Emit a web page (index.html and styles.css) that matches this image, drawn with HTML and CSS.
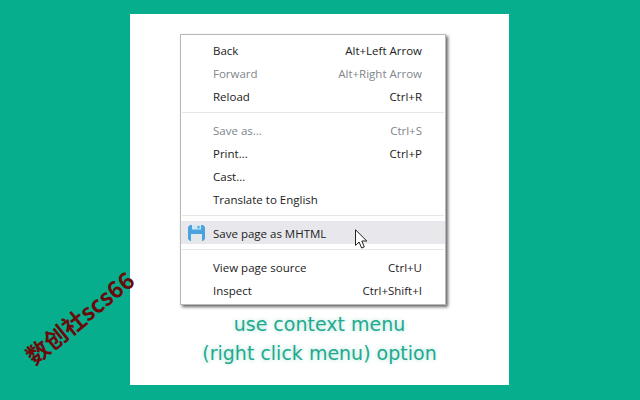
FILE: index.html
```html
<!DOCTYPE html>
<html lang="en">
<head>
<meta charset="utf-8">
<title>Save page as MHTML</title>
<link rel="stylesheet" href="styles.css">
</head>
<body>
<div class="watermark">数创社scs66</div>
<main class="panel">
  <div class="menu">
    <div class="row"><span>Back</span><span>Alt+Left Arrow</span></div>
    <div class="row off"><span>Forward</span><span>Alt+Right Arrow</span></div>
    <div class="row"><span>Reload</span><span>Ctrl+R</span></div>
    <hr class="sep sep-a">
    <div class="row off"><span>Save as...</span><span>Ctrl+S</span></div>
    <div class="row"><span>Print...</span><span>Ctrl+P</span></div>
    <div class="row"><span>Cast...</span></div>
    <div class="row"><span>Translate to English</span></div>
    <hr class="sep sep-b">
    <div class="row hot">
      <svg class="disk" viewBox="0 0 17 16" aria-hidden="true">
        <path fill="#4aa3df" d="M2 0h13l2 2v12l-2 2H2l-2-2V2z"/>
        <rect x="4" y="0" width="9" height="4.5" fill="#cfe6f6"/>
        <rect x="9.5" y="1" width="2" height="2.5" fill="#4aa3df"/>
        <rect x="3" y="9" width="11" height="7" fill="#e3e7ea"/>
      </svg>
      <span>Save page as MHTML</span>
      <svg class="cursor" viewBox="0 0 13 21" aria-hidden="true">
        <path fill="#fff" stroke="#222" stroke-width="1" stroke-linejoin="round" d="M.5.8v15.6l3.6-3.4 2.5 6 2.7-1.1-2.5-5.9h5z"/>
      </svg>
    </div>
    <hr class="sep sep-c">
    <div class="row"><span>View page source</span><span>Ctrl+U</span></div>
    <div class="row"><span>Inspect</span><span>Ctrl+Shift+I</span></div>
  </div>
  <p class="caption">use context menu<br>(right click menu) option</p>
</main>
</body>
</html>
```
FILE: styles.css
```css
html, body { margin: 0; height: 400px; overflow: hidden; }
body { background: #06ae8e; font-family: "Open Sans", "Noto Sans", sans-serif; padding: 14px 0 0 130px; box-sizing: border-box; }
.panel { width: 379px; height: 371px; background: #fff; padding: 20px 0 0 50px; box-sizing: border-box; }
.menu { width: 266px; height: 271px; box-sizing: border-box; background: #fff; border: 1px solid #b9b9b9; box-shadow: 2px 2px 3px #666; padding-top: 4px; font-size: 11.5px; color: #222; }
.row { height: 23px; display: flex; justify-content: space-between; align-items: center; padding: 0 23px 0 32px; position: relative; }
.off { color: #80868b; }
.hot { background: #e8e8ec; justify-content: flex-start; padding-top: 2px; box-sizing: border-box; }
.disk { position: absolute; left: 7px; top: 4px; width: 17px; height: 16px; }
.cursor { position: absolute; left: 174px; top: 8px; width: 13px; height: 21px; }
.sep { border: 0; height: 1px; background: #e6e6e6; }
.sep-a { margin: 4px 1px 6px; }
.sep-b { margin: 4px 1px 5px; }
.sep-c { margin: 5px 1px 6px; }
.caption { margin: 5px 0 0 -50px; width: 379px; text-align: center; font-family: "DejaVu Sans", sans-serif; font-size: 19px; line-height: 29px; color: #1fa98e; text-shadow: 0 0 4px #a8e0d3; }
.watermark { position: absolute; left: 7px; top: 305px; width: 144px; text-align: center; font-family: "Noto Sans CJK SC", "DejaVu Sans", sans-serif; font-weight: 700; font-size: 23px; line-height: 24px; color: #6a0a0a; white-space: nowrap; transform: rotate(-39deg); }
```
